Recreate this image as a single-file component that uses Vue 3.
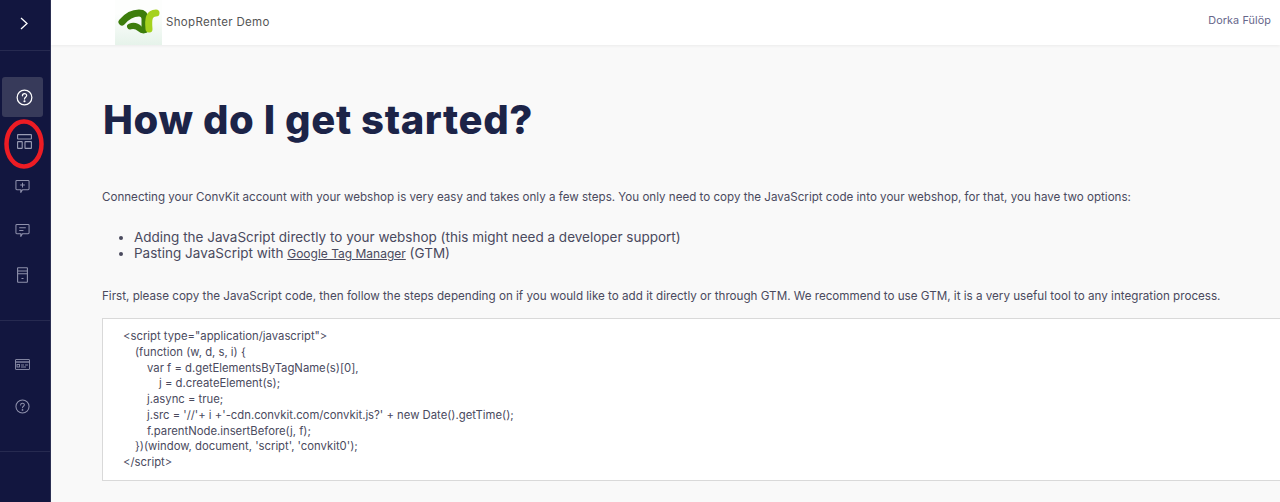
<script setup>
const code = [
  { indent: 0, text: '<script type="application/javascript">' },
  { indent: 1, text: '(function (w, d, s, i) {' },
  { indent: 2, text: 'var f = d.getElementsByTagName(s)[0],' },
  { indent: 3, text: 'j = d.createElement(s);' },
  { indent: 2, text: 'j.async = true;' },
  { indent: 2, text: "j.src = '//'+ i +'-cdn.convkit.com/convkit.js?' + new Date().getTime();" },
  { indent: 2, text: 'f.parentNode.insertBefore(j, f);' },
  { indent: 1, text: "})(window, document, 'script', 'convkit0');" },
  { indent: 0, text: '</' + 'script>' },
]
const indentClass = (n) => 'ind' + n
</script>

<template>
  <div class="app">
    <aside class="side">
      <div class="side-top">
        <svg width="8" height="13" viewBox="0 0 8 13" fill="none" stroke="#fff" stroke-width="1.3"><path d="M1 1 7 6.500 1 12"/></svg>
      </div>
      <nav class="group first">
        <div class="item shift active">
          <svg width="17" height="17" viewBox="0 0 18 18" fill="none" stroke="#fff" stroke-width="1.3"><circle cx="9" cy="9" r="7.8"/><path d="M6.8 7.2c0-3 4.500-3 4.500-.2 0 1.800-2.300 1.700-2.300 3.600" stroke-linecap="round"/><circle cx="9" cy="13" r=".5" fill="#fff"/></svg>
        </div>
        <div class="item shift">
          <svg width="15" height="15" viewBox="0 0 15 15" fill="none" stroke="#9a9cb4" stroke-width="1.100"><rect x=".6" y=".6" width="13.800" height="4.400" rx=".4"/><rect x=".6" y="7.600" width="4.600" height="6.800" rx=".4"/><rect x="8" y="7.600" width="6.400" height="6.800" rx=".4"/></svg>
        </div>
        <div class="item">
          <svg width="15" height="15" viewBox="0 0 16 16" fill="none" stroke="#8f91ac" stroke-width="1.100"><path d="M2 1.500h12a1 1 0 0 1 1 1v8a1 1 0 0 1-1 1H8l-2 3 .3-3H2a1 1 0 0 1-1-1v-8a1 1 0 0 1 1-1z"/><path d="M8 4v5M5.500 6.500h5"/></svg>
        </div>
        <div class="item">
          <svg width="15" height="15" viewBox="0 0 16 16" fill="none" stroke="#8f91ac" stroke-width="1.100"><path d="M2 1.500h12a1 1 0 0 1 1 1v8a1 1 0 0 1-1 1H8l-2 3 .3-3H2a1 1 0 0 1-1-1v-8a1 1 0 0 1 1-1z"/><path d="M4.500 5h7M4.500 8h4.500"/></svg>
        </div>
        <div class="item">
          <svg width="11" height="16" viewBox="0 0 11 16" fill="none" stroke="#8f91ac" stroke-width="1.100"><rect x=".6" y=".8" width="9.800" height="14.400" rx=".4"/><path d="M.6 4h9.800M.6 6.800h9.800M4.500 11.500h2"/></svg>
        </div>
      </nav>
      <nav class="group second">
        <div class="item">
          <svg width="15" height="11" viewBox="0 0 15 11" fill="none" stroke="#8f91ac" stroke-width=".9"><rect x=".5" y=".5" width="14" height="10" rx=".4"/><path d="M.5 3h14" stroke-width="1.300"/><rect x="2" y="5.500" width="2.500" height="2.500"/><path d="M6 6h3M10 6h3M6 8h5"/></svg>
        </div>
        <div class="item">
          <svg width="15" height="15" viewBox="0 0 16 16" fill="none" stroke="#8f91ac" stroke-width="1.100"><circle cx="8" cy="8" r="7"/><path d="M6 6.400c0-2.600 4-2.600 4-.2 0 1.600-2 1.500-2 3.200" stroke-linecap="round"/><circle cx="8" cy="11.600" r=".4" fill="#8f91ac"/></svg>
        </div>
      </nav>
    </aside>

    <div class="main">
      <header class="top">
        <div class="brand">
          <div class="logo">
            <svg width="42" height="30" viewBox="0 0 42 30" fill="none" stroke-linecap="round">
              <path d="M4 17C9 11 14 8 21 8 25 8 27 10 27 14V24" stroke="#3d7d0c" stroke-width="7"/>
              <path d="M12 21.500C16 20 19 21 22 24 24 26 27 26 29 24" stroke="#3d7d0c" stroke-width="6"/>
              <path d="M31 24C30 14 31 8 38 8" stroke="#a5d21e" stroke-width="7"/>
            </svg>
          </div>
          <span class="shop">ShopRenter Demo</span>
        </div>
        <span class="user">Dorka Fülöp</span>
      </header>

      <main class="content">
        <h1>How do I get started?</h1>
        <p class="intro">Connecting your ConvKit account with your webshop is very easy and takes only a few steps. You only need to copy the JavaScript code into your webshop, for that, you have two options:</p>
        <ul>
          <li>Adding the JavaScript directly to your webshop (this might need a developer support)</li>
          <li>Pasting JavaScript with <a href="#">Google Tag Manager</a> (GTM)</li>
        </ul>
        <p class="then">First, please copy the JavaScript code, then follow the steps depending on if you would like to add it directly or through GTM. We recommend to use GTM, it is a very useful tool to any integration process.</p>
        <div class="code">
          <div v-for="(l, i) in code" :key="i" :class="indentClass(l.indent)">{{ l.text }}</div>
        </div>
      </main>
    </div>

    <svg class="mark" width="40" height="50" viewBox="0 0 40 50" fill="none"><ellipse cx="20" cy="25" rx="17.500" ry="22.500" stroke="#ed1c24" stroke-width="4.500"/></svg>
  </div>
</template>

<style>
html, body { margin: 0; padding: 0; }
</style>

<style scoped>
.app {
  position: relative;
  display: flex;
  width: 1280px;
  height: 502px;
  overflow: hidden;
  font-family: Inter, "Open Sans", sans-serif;
  background: #f9f9f9;
  color: #4a4a5e;
}
.side {
  width: 50px;
  flex: none;
  background: #12163f;
  border-right: 1px solid #2c3054;
  display: flex;
  flex-direction: column;
}
.side-top {
  height: 51px;
  flex: none;
  display: flex;
  align-items: center;
  justify-content: center;
  padding: 0 2px 4px 0;
  box-sizing: border-box;
  border-bottom: 1px solid #262a50;
}
.group { display: flex; flex-direction: column; align-items: flex-start; padding-left: 2px; box-sizing: border-box; flex: none; }
.first {
  padding-top: 26px;
  height: 270px;
  border-bottom: 1px solid #262a50;
}
.second {
  height: 131px;
  padding-top: 23px;
  border-bottom: 1px solid #262a50;
}
.item {
  width: 41px;
  height: 40px;
  margin-bottom: 4.500px;
  display: flex;
  align-items: center;
  justify-content: center;
  border-radius: 3px;
  box-sizing: border-box;
}
.shift { padding-left: 3px; }
.second .item { margin-bottom: 2px; }
.active { background: #373a5a; }
.main { flex: 1; min-width: 0; display: flex; flex-direction: column; }
.top {
  height: 45px;
  flex: none;
  background: #fff;
  box-shadow: 0 1px 3px rgba(0,0,0,.06);
  display: flex;
  align-items: flex-start;
  justify-content: space-between;
  padding: 0 9px 0 64px;
}
.brand { display: flex; align-items: center; height: 45px; }
.logo {
  width: 47px;
  height: 45px;
  background: linear-gradient(#fdfefd 30%, #e6f3ea);
  display: flex;
  justify-content: center;
  padding-top: 5px;
  box-sizing: border-box;
}
.shop { font-size: 11.500px; margin-left: 4px; color: #555; letter-spacing: .33px; position: relative; top: -1px; }
.user { font-size: 10.800px; line-height: 42px; color: #66668a; letter-spacing: .1px; }
.content { padding: 0 0 0 52px; min-width: 0; }
h1 {
  margin: 51px 0 0;
  font-size: 40px;
  line-height: 48px;
  font-weight: 800;
  letter-spacing: .6px;
  color: #1c2448;
}
.intro, .then { font-size: 11.650px; line-height: 16px; margin: 0; white-space: nowrap; margin-left: -1px; }
.intro { margin-top: 45px; font-size: 11.600px; }
ul { margin: 24px 0 0; padding: 0 0 0 31px; font-size: 13.500px; line-height: 16px; }
a { color: inherit; font-size: 12px; }
.then { margin-top: 26px; }
.code {
  margin-top: 14px;
  margin-left: -1px;
  width: 1180px;
  height: 163px;
  box-sizing: border-box;
  background: #fff;
  border: 1px solid #d9d9d9;
  padding: 10px 20px;
  font-size: 11.300px;
  line-height: 15.750px;
  white-space: pre;
}
.ind1 { padding-left: 12px; }
.ind2 { padding-left: 24px; }
.ind3 { padding-left: 36px; }
.mark { position: absolute; left: 4px; top: 119px; }
</style>
